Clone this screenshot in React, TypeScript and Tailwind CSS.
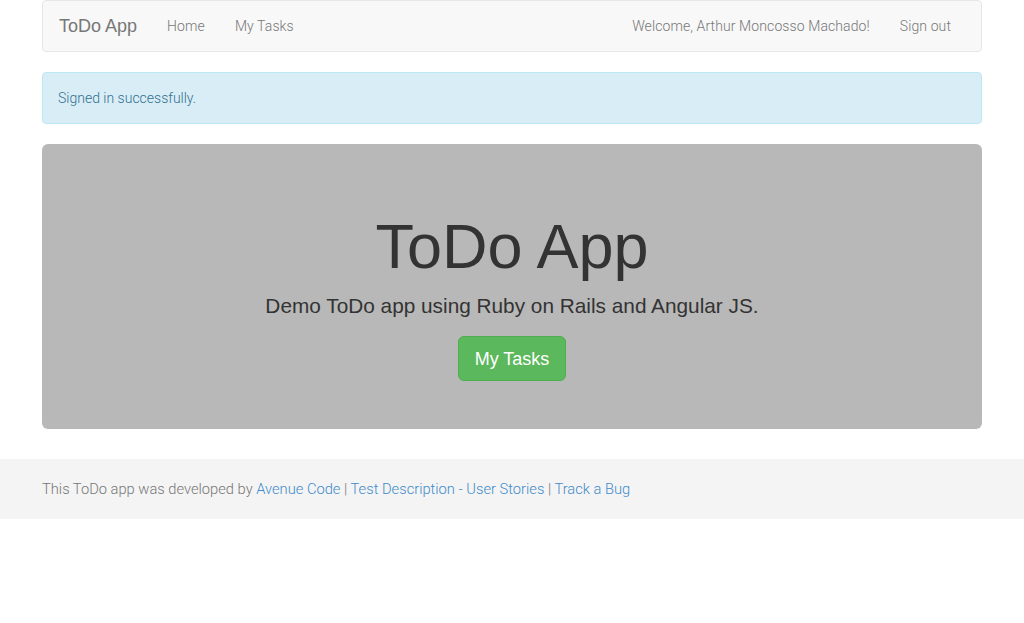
export default function App() {
  const light = "font-['Roboto',sans-serif] font-light";
  const helv = "font-['Liberation_Sans','Arial',sans-serif]";
  return (
    <div className={`min-h-[623px] bg-white text-[14px] leading-[20px] text-[#333] ${light}`}>
      <div className="mx-auto w-[940px]">
        <nav className="mb-[20px] flex h-[52px] items-center rounded-[4px] border border-[#e7e7e7] bg-[#f8f8f8] tracking-[0.1px]">
          <span className={`px-[15px] pl-[16px] text-[18px] leading-[20px] text-[#777] ${helv} font-normal tracking-normal`}>ToDo App</span>
          <span className="px-[15px] text-[#777]">Home</span>
          <span className="px-[15px] text-[#777]">My Tasks</span>
          <div className="ml-auto mr-[15px] flex">
            <span className="px-[15px] text-[#777]">Welcome, Arthur Moncosso Machado!</span>
            <span className="px-[15px] text-[#777]">Sign out</span>
          </div>
        </nav>
        <div className="mb-[20px] rounded-[4px] border border-[#bce8f1] bg-[#d9edf7] p-[15px] text-[#31708f]">
          Signed in successfully.
        </div>
        <div className={`mb-[30px] flex flex-col items-center rounded-[6px] bg-[#b8b8b8] px-[60px] pb-[48px] pt-[68px] text-[#333] ${helv} font-normal`}>
          <h1 className="mb-[10px] text-[63px] leading-[69px]">ToDo App</h1>
          <p className="mb-[15px] text-[20.8px] leading-[30px]">Demo ToDo app using Ruby on Rails and Angular JS.</p>
          <button className="h-[45px] rounded-[6px] border border-[#4cae4c] bg-[#5cb85c] px-[16px] text-[18px] leading-[24px] text-white">
            My Tasks
          </button>
        </div>
      </div>
      <footer className="flex h-[60px] items-center bg-[#f4f4f4]">
        <div className="mx-auto w-[940px] text-[14.7px] text-[#777]">
          This ToDo app was developed by <a className="text-[#428bca]">Avenue Code</a> |{" "}
          <a className="text-[#428bca]">Test Description - User Stories</a> |{" "}
          <a className="text-[#428bca]">Track a Bug</a>
        </div>
      </footer>
    </div>
  );
}
